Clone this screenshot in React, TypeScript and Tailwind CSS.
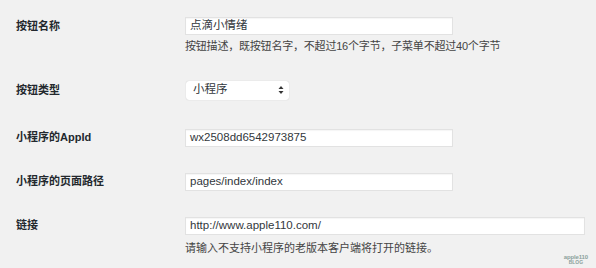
import { FC, ReactNode } from 'react';

const font = { fontFamily: '"Liberation Sans", "Noto Sans CJK SC", sans-serif' };

const Row: FC<{ label: string; className?: string; children: ReactNode }> = ({ label, className = '', children }) => (
  <div className={`flex items-start ${className}`}>
    <div className="w-[185px] shrink-0 pl-[16px] h-[18px] flex items-center text-[11px] font-bold text-[#23282d]">
      {label}
    </div>
    <div className="flex flex-col">{children}</div>
  </div>
);

const TextInput: FC<{ value: string; width: string }> = ({ value, width }) => (
  <div
    className={`${width} h-[18px] bg-white border border-[#e2e2e2] shadow-[inset_0_1px_1px_rgba(0,0,0,0.04)] flex items-center pl-[4px] text-[11.5px] text-[#32373c]`}
  >
    {value}
  </div>
);

const App: FC = () => {
  return (
    <div className="w-[596px] h-[268px] bg-[#f1f1f1] relative overflow-hidden" style={font}>
      <div className="flex flex-col">
        <Row label="按钮名称" className="mt-[17px]">
          <TextInput value="点滴小情绪" width="w-[268px]" />
          <div className="mt-[4px] leading-[14px] text-[11px] text-[#444] tracking-[-0.2px]">
            按钮描述，既按钮名字，不超过16个字节，子菜单不超过40个字节
          </div>
        </Row>

        <Row label="按钮类型" className="mt-[28px]">
          <div className="w-[103px] h-[19px] -mt-[0.5px] ml-[1px] bg-white rounded-[3px] shadow-[0_0_1px_rgba(0,0,0,0.25)] flex items-center justify-between pl-[7px] pr-[5px] text-[11.5px] text-[#32373c]">
            <span>小程序</span>
            <svg width="6" height="10" viewBox="0 0 6 10">
              <path d="M3 1 L5.5 4 L0.5 4 Z" fill="#333" />
              <path d="M3 9 L5.5 6 L0.5 6 Z" fill="#333" />
            </svg>
          </div>
        </Row>

        <Row label="小程序的AppId" className="mt-[29px]">
          <TextInput value="wx2508dd6542973875" width="w-[268px]" />
        </Row>

        <Row label="小程序的页面路径" className="mt-[26px]">
          <TextInput value="pages/index/index" width="w-[268px]" />
        </Row>

        <Row label="链接" className="mt-[26px]">
          <TextInput value="http://www.apple110.com/" width="w-[400px]" />
          <div className="mt-[6px] leading-[14px] text-[11px] text-[#444]">
            请输入不支持小程序的老版本客户端将打开的链接。
          </div>
        </Row>
      </div>

      <div className="absolute right-[8px] bottom-[3px] flex flex-col items-center leading-none text-[#5f7f78] opacity-70">
        <span className="text-[6px] font-bold tracking-tight">apple110</span>
        <span className="text-[5px] font-bold">BLOG</span>
      </div>
    </div>
  );
};

export default App;
